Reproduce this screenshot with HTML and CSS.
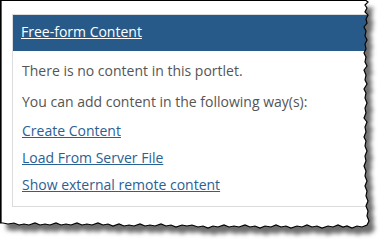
FILE: index.html
```html
<!DOCTYPE html>
<html>
<head>
<meta charset="utf-8">
<link rel="stylesheet" href="styles.css">
</head>
<body>
<div class="page">
  <section class="portlet">
    <header class="portlet-head"><a href="#" class="portlet-title">Free-form Content</a></header>
    <div class="portlet-body">
      <p class="msg">There is no content in this portlet.</p>
      <p class="msg msg-2">You can add content in the following way(s):</p>
      <ul class="actions">
        <li><a href="#">Create Content</a></li>
        <li><a href="#">Load From Server File</a></li>
        <li><a href="#">Show external remote content</a></li>
      </ul>
    </div>
  </section>
  <svg class="torn" viewBox="0 0 387 244" width="387" height="244" aria-hidden="true">
    <defs>
      <path id="paper" d="M0.5 0.5 H366 L368 2 L365 5 L367 8 L365 12 L368 15 L366 19 L367 23 L364 27 L366 31 L365 36 L367 40 L365 44 L366 49 L364 53 L366 57 L365 62 L367 66 L364 70 L366 75 L365 80 L367 84 L364 89 L366 93 L365 98 L367 103 L365 108 L366 113 L364 118 L367 122 L365 127 L366 132 L364 137 L366 141 L365 146 L367 151 L365 156 L366 161 L364 166 L366 171 L365 176 L367 181 L365 186 L367 191 L366 196 L368 201 L366 206 L368 211 L367 216 L369 221 L367 225 L362 227 L357 226 L352 228 L347 226 L343 227 L338 225 L333 227 L328 226 L322 228 L317 226 L312 227 L307 225 L302 227 L297 226 L291 228 L286 226 L281 227 L276 225 L271 227 L265 226 L260 228 L255 226 L250 227 L245 225 L239 227 L234 226 L229 227 L224 225 L218 227 L213 226 L208 228 L203 226 L198 227 L192 225 L187 226 L182 225 L176 227 L171 225 L166 226 L161 224 L155 226 L150 225 L145 226 L140 224 L134 226 L129 225 L124 226 L119 224 L113 226 L108 224 L103 225 L98 223 L92 225 L87 224 L82 225 L77 223 L71 225 L66 224 L61 225 L56 223 L50 225 L45 224 L40 225 L35 223 L29 225 L24 224 L19 225 L14 223 L8 224 L3 223 L0.5 223 Z"/>
      <clipPath id="outside">
        <path clip-rule="evenodd" d="M0 0 H387 V244 H0 Z M0.5 0.5 H366 L368 2 L365 5 L367 8 L365 12 L368 15 L366 19 L367 23 L364 27 L366 31 L365 36 L367 40 L365 44 L366 49 L364 53 L366 57 L365 62 L367 66 L364 70 L366 75 L365 80 L367 84 L364 89 L366 93 L365 98 L367 103 L365 108 L366 113 L364 118 L367 122 L365 127 L366 132 L364 137 L366 141 L365 146 L367 151 L365 156 L366 161 L364 166 L366 171 L365 176 L367 181 L365 186 L367 191 L366 196 L368 201 L366 206 L368 211 L367 216 L369 221 L367 225 L362 227 L357 226 L352 228 L347 226 L343 227 L338 225 L333 227 L328 226 L322 228 L317 226 L312 227 L307 225 L302 227 L297 226 L291 228 L286 226 L281 227 L276 225 L271 227 L265 226 L260 228 L255 226 L250 227 L245 225 L239 227 L234 226 L229 227 L224 225 L218 227 L213 226 L208 228 L203 226 L198 227 L192 225 L187 226 L182 225 L176 227 L171 225 L166 226 L161 224 L155 226 L150 225 L145 226 L140 224 L134 226 L129 225 L124 226 L119 224 L113 226 L108 224 L103 225 L98 223 L92 225 L87 224 L82 225 L77 223 L71 225 L66 224 L61 225 L56 223 L50 225 L45 224 L40 225 L35 223 L29 225 L24 224 L19 225 L14 223 L8 224 L3 223 L0.5 223 Z"/>
      </clipPath>
      <filter id="blur" x="-5%" y="-5%" width="110%" height="110%">
        <feGaussianBlur stdDeviation="2.2"/>
      </filter>
    </defs>
    <g clip-path="url(#outside)">
      <rect x="0" y="0" width="387" height="244" fill="#fff"/>
      <use href="#paper" transform="translate(6 7)" fill="#6e6e6e" filter="url(#blur)"/>
    </g>
    <use href="#paper" fill="none" stroke="#000" stroke-width="1.2"/>
    <line x1="0.8" y1="0" x2="0.8" y2="223" stroke="#000" stroke-width="1.6"/>
  </svg>
</div>
</body>
</html>
```

FILE: styles.css
```css
html, body {
  margin: 0;
  padding: 0;
  background: #fff;
}

.page {
  position: relative;
  width: 387px;
  height: 244px;
  box-sizing: border-box;
  padding: 14px 0 0 12px;
  font-family: "Open Sans", "Liberation Sans", sans-serif;
  font-size: 14px;
  line-height: 20px;
  color: #555;
}

.portlet {
  width: 370px;
  border: 1px solid #dcdcdc;
  background: #fff;
}

.portlet-head {
  background: #285a89;
  padding: 7px 8px 9px;
}

.portlet-title {
  color: #fff;
  text-decoration: underline;
}

.portlet-body {
  padding: 10px 9px 11px;
}

.msg {
  margin: 0 0 11px;
}

.msg-2 {
  margin-bottom: 9px;
}

.actions {
  list-style: none;
  margin: 0;
  padding: 0;
  display: flex;
  flex-direction: column;
  gap: 7px;
}

.actions a {
  color: #2a6194;
  text-decoration: underline;
}

.torn {
  position: absolute;
  left: 0;
  top: 0;
  pointer-events: none;
}
```
